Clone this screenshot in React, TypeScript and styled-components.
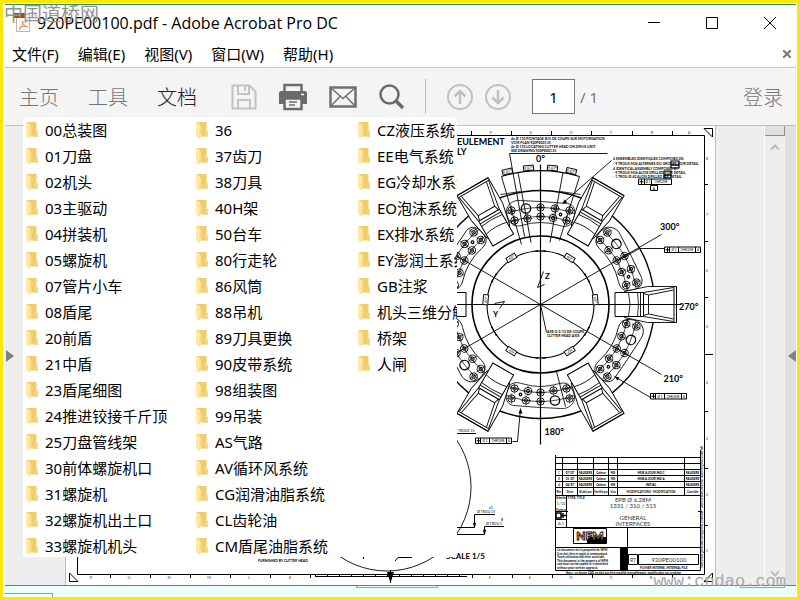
import React from "react";
import styled, { createGlobalStyle } from "styled-components";

const GlobalStyle = createGlobalStyle`
  * { box-sizing: border-box; }
  body { margin: 0; background: #ffffff; }
  button, input { font: inherit; color: inherit; }
`;

const UI_FONT = `"Noto Sans", "Noto Sans CJK SC", sans-serif`;

const Frame = styled.div`
  position: relative;
  display: flex;
  height: 100vh;
  min-height: 400px;
  border: 3px solid #fbe60a;
  padding: 1px 1px 0 2px;
  background: #ffffff;
  font-family: ${UI_FONT};
  color: #000000;
  overflow: hidden;
`;

const Window = styled.div`
  flex: 1;
  min-width: 0;
  display: flex;
  flex-direction: column;
  border-top: 1px solid #2e9155;
`;

const TitleBar = styled.header`
  display: flex;
  align-items: center;
  height: 36px;
  padding-left: 9px;
  flex: none;
`;

const Title = styled.h1`
  flex: 1;
  margin: 0 0 0 7px;
  font-size: 16px;
  line-height: 24px;
  font-weight: 400;
  font-family: "Open Sans", "Noto Sans CJK SC", sans-serif;
  white-space: nowrap;
`;

const WindowButtons = styled.div`
  display: flex;
`;

const PlainButton = styled.button`
  display: flex;
  align-items: center;
  justify-content: center;
  padding: 0;
  border: 0;
  background: none;
  cursor: pointer;
`;

const WindowButton = styled(PlainButton)`
  width: 58px;
  height: 34px;
  padding-left: 6px;
`;

const MenuBar = styled.nav`
  display: flex;
  align-items: center;
  height: 27px;
  gap: 19px;
  padding: 0 3px 0 7px;
  border-bottom: 1px solid #c4c4c4;
  flex: none;
`;

const MenuButton = styled(PlainButton)`
  font-size: 15px;
  line-height: 22px;
  white-space: nowrap;
`;

const CloseDocument = styled(PlainButton)`
  margin-left: auto;
  width: 12px;
  height: 20px;
`;

const Toolbar = styled.div`
  display: flex;
  align-items: center;
  height: 57px;
  padding: 0 13px 0 14px;
  background: #f4f4f4;
  flex: none;
`;

const Tabs = styled.div`
  display: flex;
  gap: 29px;
  margin-right: 34px;
`;

const TabButton = styled(PlainButton)<{ $active?: boolean }>`
  font-size: 20px;
  line-height: 30px;
  font-weight: 300;
  font-family: "Noto Sans CJK SC", sans-serif;
  white-space: nowrap;
  color: ${(p) => (p.$active ? "#222222" : "#767676")};
`;

const Tools = styled.div<{ $gap: number }>`
  display: flex;
  align-items: center;
  gap: ${(p) => p.$gap}px;
`;

const Divider = styled.span`
  width: 1px;
  height: 35px;
  margin: 0 21px 0 20px;
  background: #c0c0c0;
`;

const PageInput = styled.input`
  width: 43px;
  height: 35px;
  margin: 0 5px 0 21px;
  border: 1px solid #767676;
  background: #ffffff;
  text-align: center;
  font-size: 15px;
  padding: 0;
`;

const PageTotal = styled.span`
  font-size: 15px;
  color: #767676;
  white-space: nowrap;
`;

const SignIn = styled(TabButton)`
  margin-left: auto;
`;

const Workspace = styled.main`
  display: flex;
  flex: 1;
  min-height: 0;
  background: #eeeeee;
  border-top: 1px solid #bdbdbd;
  border-bottom: 1px solid #3a9a5e;
`;

const LeftGutter = styled.div`
  flex: none;
  width: 60px;
  display: flex;
  align-items: center;
`;

const PdfPage = styled.section`
  flex: 1;
  min-width: 0;
  background: #ffffff;
  border: solid #bdbdbd;
  border-width: 0 1px;
  svg { display: block; width: 100%; height: 100%; }
`;

const RightGutter = styled.div`
  flex: none;
  width: 48px;
`;

const ScrollTrack = styled.div`
  flex: none;
  width: 21px;
  display: flex;
  flex-direction: column;
  align-items: center;
  border-left: 1px solid #ffffff;
`;

const ScrollThumb = styled.div`
  align-self: stretch;
  height: 10px;
  background: #e0e0e0;
  border-right: 1px solid #8d8d8d;
  border-bottom: 1px solid #8d8d8d;
`;

const ScrollButton = styled(PlainButton)<{ $end?: boolean }>`
  width: 20px;
  height: 22px;
  margin-top: ${(p) => (p.$end ? "auto" : "0")};
`;

const RightPanel = styled.div`
  flex: none;
  width: 11px;
  display: flex;
  align-items: center;
  justify-content: flex-end;
  background: #e0e0e0;
`;

const StatusBar = styled.footer`
  display: flex;
  justify-content: space-between;
  align-items: flex-start;
  height: 11px;
  padding-right: 11px;
  background: #ebffff;
  flex: none;
`;

const StatusTab = styled.span`
  width: 48px;
  height: 4px;
  align-self: flex-end;
  border-top: 1px solid #9a9a9a;
  border-right: 1px solid #9a9a9a;
`;

const StatusEdge = styled.span<{ $width: number }>`
  width: ${(p) => p.$width}px;
  height: 2px;
  border: 1px solid #a0a0a0;
  border-top: 0;
`;

const FileWindow = styled.section`
  position: absolute;
  left: 20px;
  top: 114px;
  width: 434px;
  height: 440px;
  overflow: hidden;
  display: grid;
  grid-template-columns: 170px 162px 1fr;
  padding-left: 3px;
  background: #ffffff;
`;

const FileColumn = styled.ul`
  margin: 0;
  padding: 0;
  list-style: none;
  min-width: 0;
`;

const FileRow = styled.li`
  display: flex;
  align-items: center;
  gap: 7px;
  height: 26px;
  font-size: 15px;
  line-height: 26px;
  white-space: nowrap;
  svg { flex: none; }
`;

const Watermark = styled.div`
  position: absolute;
  left: 1px;
  top: -3px;
  font-family: "Noto Sans CJK SC", sans-serif;
  font-size: 19px;
  line-height: 26px;
  color: #929292;
  pointer-events: none;
`;

const SiteMark = styled.div`
  position: absolute;
  right: 11px;
  bottom: 2px;
  font-family: "Liberation Mono", monospace;
  font-size: 17px;
  line-height: 26px;
  color: #a8a8a8;
  pointer-events: none;
`;

const columns: string[][] = [
  ["00总装图", "01刀盘", "02机头", "03主驱动", "04拼装机", "05螺旋机", "07管片小车", "08盾尾", "20前盾", "21中盾", "23盾尾细图", "24推进铰接千斤顶", "25刀盘管线架", "30前体螺旋机口", "31螺旋机", "32螺旋机出土口", "33螺旋机机头"],
  ["36", "37齿刀", "38刀具", "40H架", "50台车", "80行走轮", "86风筒", "88吊机", "89刀具更换", "90皮带系统", "98组装图", "99吊装", "AS气路", "AV循环风系统", "CG润滑油脂系统", "CL齿轮油", "CM盾尾油脂系统"],
  ["CZ液压系统", "EE电气系统", "EG冷却水系统", "EO泡沫系统", "EX排水系统", "EY澎润土系统", "GB注浆", "机头三维分解", "桥架", "人闸"],
];

const FolderIcon = () => (
  <svg width="12" height="18" viewBox="0 0 12 18">
    <path d="M1 1h9.500v14.500H2z" fill="#f0cd6c" />
    <path d="M9 9l3 1v6H9z" fill="#f5d67f" />
    <path d="M0 1l4 2v14l-1.500.5L0 15z" fill="#ffe9a6" />
    <path d="M4 3l1.500 3v9L3 17z" fill="#f9dc8c" />
  </svg>
);

const PdfFileIcon = () => (
  <svg width="16" height="20" viewBox="0 0 16 20">
    <path d="M2.500 1.500h13v17h-13z" fill="#fafafa" stroke="#b5b5b5" />
    <path d="M0 0h11v5H0z" fill="#a65208" />
    <path d="M8.500 8c1.500 0 0 5-3.500 9M8.500 8c-1 1 1 5 5.500 6M5 15c2-1.500 5-2 8-1.500" fill="none" stroke="#e68a3c" />
  </svg>
);

const SaveIcon = () => (
  <svg width="26" height="26" viewBox="0 0 26 26" fill="none" stroke="#c3c3c3" strokeWidth="2">
    <path d="M1.500 1.500h17l6 6v17h-23zM7 1.500V10h11V1.500M7 24.500V16h12v8.500" />
    <path d="M14 3v4" />
  </svg>
);

const PrintIcon = () => (
  <svg width="28" height="28" viewBox="0 0 28 28">
    <path d="M5.500 9V2h17v7" fill="none" stroke="#6b6b6b" strokeWidth="2.500" />
    <path d="M2 8h24q2 0 2 2v11h-5v-4H5v4H0V10q0-2 2-2z" fill="#6b6b6b" />
    <path d="M5.500 15.500h17V26h-17z" fill="#f4f4f4" stroke="#6b6b6b" strokeWidth="2.500" />
    <path d="M10 19h8M10 22h6" stroke="#6b6b6b" strokeWidth="1.500" />
    <path d="M22 11.500h3" stroke="#f4f4f4" strokeWidth="1.500" />
  </svg>
);

const MailIcon = () => (
  <svg width="28" height="22" viewBox="0 0 28 22" fill="none" stroke="#707070">
    <path d="M1.500 1.500h25v19h-25z" strokeWidth="2.500" />
    <path d="M2 2l12 10.500L26 2M2 20l9-9.500M26 20l-9-9.500" strokeWidth="1.500" />
  </svg>
);

const SearchIcon = () => (
  <svg width="26" height="27" viewBox="0 0 26 27" fill="none" stroke="#6b6b6b">
    <circle cx="10.500" cy="11.500" r="9" strokeWidth="2.500" />
    <path d="M17 18l7 7" strokeWidth="3.500" />
  </svg>
);

const CircleArrow = ({ down }: { down?: boolean }) => (
  <svg width="26" height="26" viewBox="0 0 26 26" fill="none" stroke="#c1c1c1" strokeWidth="2">
    <circle cx="13" cy="13" r="12" />
    <path strokeWidth="2.500" d={down ? "M13 6v13M7.500 13.500l5.500 5.500 5.500-5.500" : "M13 20V7M7.500 12.500L13 7l5.500 5.500"} />
  </svg>
);

const Chevron = ({ down }: { down?: boolean }) => (
  <svg width="10" height="8" viewBox="0 0 10 8" fill="none" stroke="#bcbcbc" strokeWidth="2">
    <path d={down ? "M1 1.500l4 4 4-4" : "M1 6.500l4-4 4 4"} />
  </svg>
);

const outerBolts = [[-29, -94], [0, -97], [14.5, -96], [29, -94]];
const innerBolts = [[-26, -84], [-13, -86], [0, -88], [12.5, -86.5], [26, -84]];

const Cluster = ({ angle }: { angle: number }) => (
  <g transform={`rotate(${angle})`} fill="none" stroke="#000">
    <path d="M-34 -91C-35 -99 -28 -105 -20 -104Q5 -103 27 -101C34 -100 36 -93 33 -86C31 -78 25 -77 19 -79Q0 -85 -19 -79C-27 -77 -31 -81 -34 -91z" strokeWidth="0.8" />
    {[...outerBolts, ...innerBolts].map(([x, y]) => (
      <g key={`${x},${y}`}>
        <circle cx={x} cy={y} r="3.700" strokeWidth="0.9" />
        <circle cx={x} cy={y} r="1.700" strokeWidth="0.9" />
        <path d={`M${x - 5} ${y}h10M${x} ${y - 5}v10`} strokeWidth="0.5" />
      </g>
    ))}
    <circle cx="-14.500" cy="-96" r="4.700" strokeWidth="1.300" />
    <circle cx="20" cy="-90" r="1.300" strokeWidth="1.200" />
  </g>
);

const Arm = ({ angle }: { angle: number }) => (
  <g transform={`rotate(${angle})`} stroke="#000" fill="#fff">
    <path d="M84 -13L107 -18H136V18H107L84 13z" strokeWidth="0.9" />
    <path d="M74.500 -12H103V12H74.500z" strokeWidth="1" />
    <path d="M100 -12V12M103 -12L133 -17M133 17L103 12M108 -9.500L133 -14.500M133 14.500L108 9.500V-9.500M103 -11L108 -9.500M103 11L108 9.500" fill="none" strokeWidth="0.9" />
    <path d="M133.500 -18V18M136 -18V18" strokeWidth="1" />
    <path d="M88 -12Q91 0 88 12M97 -12Q99 0 97 12" fill="none" strokeWidth="0.8" />
  </g>
);

const Tolerance = ({ x, y, short }: { x: number; y: number; short?: boolean }) => (
  <g transform={`translate(${x} ${y})`}>
    <path d={short ? "M0 0H33V5.500H0zM6 0V5.500M13 0V5.500" : "M0 0H36V5.500H0zM5 0V5.500M14 0V5.500M31 0V5.500"} fill="#fff" stroke="#000" />
    <path d="M1 2.800h4M3 .5v4.500" stroke="#000" />
    <text x="7" y="4" fontSize="3">Ø 1</text>
    <text x="16" y="4" fontSize="3">CHROME</text>
    {!short && <text x="32.500" y="4" fontSize="3">A</text>}
  </g>
);

const AngleTag = ({ angle, radius, label }: { angle: number; radius: number; label: string }) => (
  <g transform={`rotate(${angle}) translate(0 ${-radius})`}>
    <path d="M-5 -2.500H5V2.500H-5z" fill="#fff" stroke="#000" strokeWidth="0.9" />
    <text y="1.500" fontSize="4" textAnchor="middle">{label}</text>
  </g>
);

const revisionRows = [
  ["C", "07/07", "FAUGERE", "Colmar", "MS", "MISE A JOUR IND C", "FAUGERE", 474],
  ["B", "15 /07", "FAUGERE", "Colmar", "MS", "MISE A JOUR IND A", "FAUGERE", 480],
  ["A", "04/07", "FAUGERE", "Colmar", "MS", "INITIAL", "FAUGERE", 486],
] as const;
const revisionX = [559, 570, 585.5, 601, 613, 651, 692.5];

const topLetters: [number, string][] = [[491, "F"], [531, "E"], [571, "D"], [611, "C"], [652, "B"], [689, "A"]];
const bottomLetters: [number, string][] = [[91, "P"], [129, "O"], [169, "N"], [209, "M"], [249, "L"], [290, "K"], [490, "F"], [530, "E"], [571, "D"], [611, "C"], [651, "B"], [689, "A"]];
const bottomTicks = [110, 150, 190, 230, 270, 310, 472, 512, 552, 592, 632, 672];
const sideTicks = [184, 241, 297, 354, 411, 468, 525];
const allSides = [0, 60, 120, 180, 240, 300];

const Drawing = () => (
  <svg viewBox="66 126 649 459" preserveAspectRatio="xMidYMid meet" fontFamily="Lato, sans-serif" role="img" aria-label="920PE00100">
    {/* sheet border */}
    <g fill="none" stroke="#000">
      <path d="M77.500 135.500H704.500V574.500H77.500z" />
      <path d="M704 128.500H712.500V137zM69.500 573V581.500H78zM712.500 573V581.500H704z" />
      {[471, 511, 551, 591, 632, 672].map((x) => <path key={x} d={`M${x + 0.5} 131V135`} />)}
      {bottomTicks.map((x) => <path key={x} d={`M${x + 0.5} 575V578`} />)}
      {sideTicks.map((y) => <path key={y} d={`M704 ${y + 0.5}H${y === 354 ? 713 : 708}`} />)}
      <path d="M315 576.500H467" />
      <path d="M315 575.500H467" strokeDasharray="1 11" strokeWidth="3" />
    </g>
    <path d="M387 572h7l-3.500 11z" />
    <path d="M390.500 570V583" stroke="#000" />
    <g fontSize="4" textAnchor="middle" fill="#444">
      {topLetters.map(([x, l]) => <text key={x} x={x} y="134">{l}</text>)}
      {bottomLetters.map(([x, l]) => <text key={x} x={x} y="579">{l}</text>)}
      {[8, 7, 6, 5, 4, 3, 2, 1].map((n, i) => <text key={n} x="707" y={160 + i * 56}>{n}</text>)}
    </g>

    {/* cutter head */}
    <g transform="translate(540.5 304.5)" fill="none" stroke="#000">
      <circle r="114" strokeWidth="1.400" />
      <circle r="97" strokeWidth="0.7" />
      <circle r="88" strokeWidth="0.7" />
      {allSides.map((a) => <Cluster key={a} angle={a} />)}
      {allSides.map((a) => <Arm key={a} angle={a} />)}
      <circle r="68.500" strokeWidth="1.600" />
      <circle r="53.500" strokeWidth="1.100" />
      <path d="M-121 -70L121 70M-121 70L121 -70" strokeWidth="0.9" />
      <path d="M0 -140V140M-90 0H141" strokeWidth="1.200" />
      <path d="M-39 -128A134 134 0 0 1 39 -128" strokeWidth="1.200" />
      <path d="M-39 -128L-19 -60M-22.500 -132L-9.500 -62M22.500 -132L9.500 -62M39 -128L19 -64M-31 -151L-16 -68M-31 -151H67M71 -144L22 -101M16 67L25 102" strokeWidth="0.9" />
      <path d="M-40 -110L-20 -113M20 -113L40 -110" strokeWidth="0.8" />
      <path d="M0 0L6 28M-3 -17L3 -33M-3 -17L4 -20M-46 -1L-36 -3L-41 4M74 72L110 93H116M78 -44L99 -56H125M-20 104L-23 137H-28" strokeWidth="0.9" />
      <g fill="#000" stroke="none">
        {allSides.map((a) => <path key={a} transform={`rotate(${a})`} d="M0 -53.500l-5 -1v2zM0 -53.500l5 -1v2z" />)}
        <path d="M22 -101l5-1-3-3zM74 72l5 1-2 3zM-20 104l2 5h-4z" />
        {[32, -32, 148, -148].map((a) => <AngleTag key={a} angle={a} radius={55} label="60°" />)}
        <AngleTag angle={85} radius={55} label="60°" />
        <AngleTag angle={-85} radius={55} label="60°" />
        <AngleTag angle={-14} radius={137} label="9,87°" />
        <AngleTag angle={-5} radius={137} label="9,87°" />
        <AngleTag angle={5} radius={137} label="9,87°" />
        <AngleTag angle={13} radius={137} label="9,87°" />
      </g>
    </g>
    <g fontSize="9" fontWeight="700">
      <text x="536" y="162">0°</text>
      <text x="660" y="230">300°</text>
      <text x="679" y="310">270°</text>
      <text x="663.500" y="382">210°</text>
      <text x="544.500" y="435">180°</text>
      <text x="545" y="279" fontSize="8">Z</text>
      <text x="493" y="317" fontSize="8">Y</text>
      <text x="457" y="145">EULEMENT</text>
      <text x="457" y="155">LY</text>
      <text x="446" y="559" fontSize="8">SCALE 1/5</text>
    </g>
    <g fontSize="3.500">
      <g fontWeight="700">
        <text x="511" y="140">4x Ø 110 PIONTAGE B15 DE COUPE SUR MOTORISATION</text>
        <text x="511" y="144">VOIR PLAN 920PE00135</text>
        <text x="511" y="148">4x Ø 110 LOCATING CUTTER HEAD ON DRIVE UNIT</text>
        <text x="511" y="152">SEE DRAWING 920PE00135</text>
        <text x="613" y="160">4 ENSEMBLES IDENTIQUES COMPOSES DE:</text>
        <text x="613" y="165">- 9 TROUS M36 ALTERNES DU GROUPE VOIR DETAIL</text>
        <text x="613" y="170">4 IDENTICAL ASSEMBLY COMPOSED BY</text>
        <text x="613" y="174">- 9 TROUS M36 ALOIS DRILLED VOIR DETAIL</text>
        <text x="613" y="178">- 1 TROU Ø 40 ALOIS DRILLED SEE DETAIL</text>
        <text x="547" y="333">AXE 0/3/15 DE COUPE</text>
        <text x="547" y="337">CUTTER HEAD AXIS</text>
        <text x="258" y="562">FURNISHED BY CUTTER HEAD</text>
      </g>
      <text x="458" y="432">TROUS 15</text>
      <text x="477" y="513">Ø TROU 15</text>
      <text x="486" y="525">Ø TROU 1</text>
      <text x="489" y="509">x1</text>
      <text x="501" y="521">B</text>
    </g>
    <path d="M671 161h8v7h-8zM664 171h7v7h-7z" fill="none" stroke="#000" strokeWidth="1.200" />
    <path d="M671 165h8M664 175h7" stroke="#000" strokeWidth="1.500" />
    <Tolerance x={638.5} y={179} short />
    <Tolerance x={664.5} y={247} />
    <Tolerance x={650.5} y={393.5} />
    <Tolerance x={475.5} y={438} />
    <path d="M650.500 185.500h7v5h-7z" fill="none" stroke="#000" />
    <text x="652.500" y="190" fontSize="4">A</text>

    {/* detail view */}
    <g fill="none" stroke="#000">
      <circle cx="387" cy="487" r="84" strokeWidth="0.9" />
      <path d="M495 514.500H474.500V527.500H457M504 526.500H484.500V534.500H457M457 433.500H476M395 561L398 557.500H412M363.500 557V559" />
      <path d="M473.500 523h2l-1 4zM483.500 530h2l-1 4z" />
    </g>

    {/* title block */}
    <g fill="none" stroke="#000">
      <path d="M555.500 455V570.500H700.500V450M555 457.500H700M555 463.500H700M555 469.500H700M555 475.500H700M555 481.500H700M555 487.500H700M555 495.500H700M555 527.500H700M555 547.500H700" />
      <path d="M562.500 457V495M577.500 457V495M593.500 457V495M608.500 457V495M617.500 457V495M684.500 457V495M566.500 495V527M555 511.500H568M555 519.500H566M627.500 527V570M698 511.500H702" />
      <path d="M573.500 528.500H606.500V543.500H573.500zM628.500 554.500H637.500V564.500H628.500zM638.500 554.500H698.500V564.500H638.500z" />
    </g>
    <path d="M620 547h8v23h-8zM587 539l3-2h16v6h-19z" />
    <g fontSize="3" textAnchor="middle">
      {revisionRows.map((row) => row.slice(0, 7).map((cell, i) => <text key={`${row[7]}-${i}`} x={revisionX[i]} y={row[7]} fontWeight={i === 0 ? 400 : 900}>{cell}</text>))}
      <g fontWeight="700">
        <text x="559" y="493">Rev</text>
        <text x="570" y="493">Date</text>
        <text x="585.500" y="493">Etabli par</text>
        <text x="601" y="493">Verifié par</text>
        <text x="613" y="493">Visa</text>
        <text x="651" y="493">MODIFICATIONS - MODIFICATION</text>
        <text x="692.500" y="493">Contrôle</text>
        <text x="576" y="499">TITRE, TITLE</text>
        <text x="561" y="499">Echelle</text>
        <text x="561" y="510.500">Format</text>
      </g>
    </g>
    <g fontSize="6" textAnchor="middle" fill="#333">
      <text x="633" y="502">EPB Ø 6.28M</text>
      <text x="633" y="508">1331 / 310 / 515</text>
      <text x="633" y="520">GENERAL</text>
      <text x="633" y="526">INTERFACES</text>
      <text x="561" y="505" fontSize="4">1/10</text>
      <text x="561" y="525" fontSize="4">A 1</text>
      <text x="633" y="562" fontSize="5">RT</text>
      <text x="669" y="562" fontSize="6">920PE00100</text>
    </g>
    <path d="M556 513h5v5h-5zM563 513v5M561 515.500h5" fill="none" stroke="#000" strokeWidth="1.500" />
    <text x="590" y="540" fontSize="12" fontWeight="900" textAnchor="middle" fill="#fff" stroke="#000" strokeWidth="0.9">NFM</text>
    <g fontSize="3" fontWeight="700">
      {[
        "Ce document est la propriété de NFM.",
        "Il ne doit être ni copié ni communiqué.",
        "Toute utilisation doit être autorisée.",
        "This document is the property of NFM",
        "and must not be copied or transmitted",
        "without prior written approval.",
      ].map((line, i) => <text key={line} x="557" y={551 + i * 3.5}>{line}</text>)}
      <text x="640" y="568.500">FICHIER INTERNE, INTERNAL FILE</text>
      <text x="566" y="573.500">Nota : ce dessin CAD ne doit pas être modifié manuellement, modification sur système</text>
      <text transform="translate(703 568) rotate(-90)">Tolérances générales usinage ISO 2768 mK - General tolerances for machining ISO 2768 mK</text>
    </g>
  </svg>
);

export default function App() {
  return (
    <>
      <GlobalStyle />
      <Frame>
        <Window>
          <TitleBar>
            <PdfFileIcon />
            <Title>920PE00100.pdf - Adobe Acrobat Pro DC</Title>
            <WindowButtons>
              <WindowButton aria-label="最小化">
                <svg width="12" height="12" stroke="#000"><path d="M0 5.500h12" /></svg>
              </WindowButton>
              <WindowButton aria-label="最大化">
                <svg width="12" height="12" stroke="#000" fill="none"><path d="M.5 .5h11v11h-11z" /></svg>
              </WindowButton>
              <WindowButton aria-label="关闭">
                <svg width="12" height="12" stroke="#000"><path d="M0 0l12 12M12 0L0 12" /></svg>
              </WindowButton>
            </WindowButtons>
          </TitleBar>
          <MenuBar>
            {["文件(F)", "编辑(E)", "视图(V)", "窗口(W)", "帮助(H)"].map((m) => <MenuButton key={m}>{m}</MenuButton>)}
            <CloseDocument aria-label="关闭文档">
              <svg width="8" height="8" stroke="#767676" strokeWidth="2"><path d="M0 0l8 8M8 0L0 8" /></svg>
            </CloseDocument>
          </MenuBar>
          <Toolbar>
            <Tabs>
              <TabButton>主页</TabButton>
              <TabButton>工具</TabButton>
              <TabButton $active>文档</TabButton>
            </Tabs>
            <Tools $gap={22}>
              <PlainButton aria-label="保存"><SaveIcon /></PlainButton>
              <PlainButton aria-label="打印"><PrintIcon /></PlainButton>
              <PlainButton aria-label="邮件"><MailIcon /></PlainButton>
              <PlainButton aria-label="查找"><SearchIcon /></PlainButton>
            </Tools>
            <Divider />
            <Tools $gap={12}>
              <PlainButton aria-label="上一页"><CircleArrow /></PlainButton>
              <PlainButton aria-label="下一页"><CircleArrow down /></PlainButton>
            </Tools>
            <PageInput aria-label="页码" defaultValue="1" />
            <PageTotal>/ 1</PageTotal>
            <SignIn>登录</SignIn>
          </Toolbar>
          <Workspace>
            <LeftGutter>
              <PlainButton aria-label="展开左侧面板">
                <svg width="9" height="14"><path d="M1 1l8 6-8 6z" fill="#808080" /></svg>
              </PlainButton>
            </LeftGutter>
            <PdfPage><Drawing /></PdfPage>
            <RightGutter />
            <ScrollTrack>
              <ScrollThumb />
              <ScrollButton aria-label="向上滚动"><Chevron /></ScrollButton>
              <ScrollButton $end aria-label="向下滚动"><Chevron down /></ScrollButton>
            </ScrollTrack>
            <RightPanel>
              <PlainButton aria-label="展开右侧面板">
                <svg width="8" height="14"><path d="M8 1L0 7l8 6z" fill="#808080" /></svg>
              </PlainButton>
            </RightPanel>
          </Workspace>
          <StatusBar>
            <StatusTab />
            <StatusEdge $width={82} />
            <StatusEdge $width={45} />
          </StatusBar>
        </Window>
        <FileWindow>
          {columns.map((names) => (
            <FileColumn key={names[0]}>
              {names.map((name) => (
                <FileRow key={name}><FolderIcon />{name}</FileRow>
              ))}
            </FileColumn>
          ))}
        </FileWindow>
        <Watermark>中国道桥网</Watermark>
        <SiteMark>www.cndao.com</SiteMark>
      </Frame>
    </>
  );
}
